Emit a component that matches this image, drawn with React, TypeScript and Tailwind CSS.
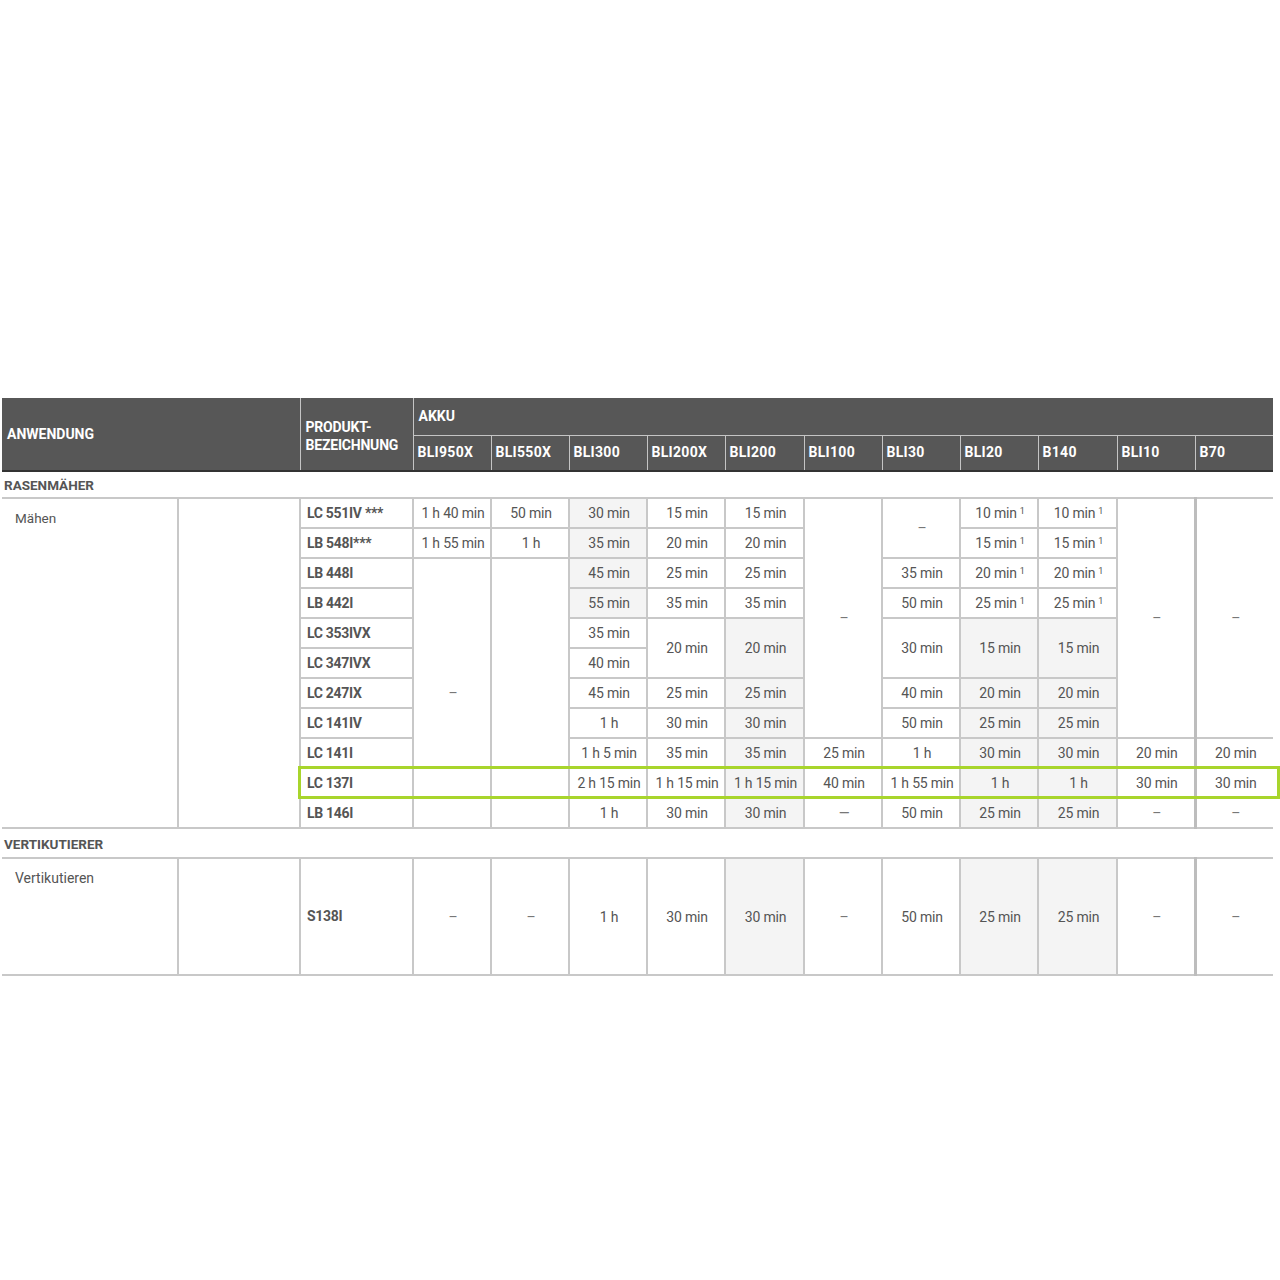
import React from 'react';

type Cell = { t?: string; s?: boolean; rs?: number; sup?: boolean; col: number };

const akku = ['BLI950X', 'BLI550X', 'BLI300', 'BLI200X', 'BLI200', 'BLI100', 'BLI30', 'BLI20', 'B140', 'BLI10', 'B70'];
const akkuWidth = ['w-[78px]', 'w-[78px]', 'w-[78px]', 'w-[78px]', 'w-[79px]', 'w-[78px]', 'w-[78px]', 'w-[78px]', 'w-[79px]', 'w-[78px]', 'w-[78px]'];

// col index: 3..13 = akku columns
const rows: { name: string; cells: Cell[] }[] = [
  {
    name: 'LC 551IV ***',
    cells: [
      { col: 3, t: '1 h 40 min' },
      { col: 4, t: '50 min' },
      { col: 5, t: '30 min', s: true },
      { col: 6, t: '15 min' },
      { col: 7, t: '15 min' },
      { col: 8, t: '–', rs: 8 },
      { col: 9, t: '–', rs: 2 },
      { col: 10, t: '10 min', sup: true },
      { col: 11, t: '10 min', sup: true },
      { col: 12, t: '–', rs: 8 },
      { col: 13, t: '–', rs: 8 },
    ],
  },
  {
    name: 'LB 548I***',
    cells: [
      { col: 3, t: '1 h 55 min' },
      { col: 4, t: '1 h' },
      { col: 5, t: '35 min', s: true },
      { col: 6, t: '20 min' },
      { col: 7, t: '20 min' },
      { col: 10, t: '15 min', sup: true },
      { col: 11, t: '15 min', sup: true },
    ],
  },
  {
    name: 'LB 448I',
    cells: [
      { col: 3, t: '–', rs: 9 },
      { col: 4, t: '', rs: 9 },
      { col: 5, t: '45 min', s: true },
      { col: 6, t: '25 min' },
      { col: 7, t: '25 min' },
      { col: 9, t: '35 min' },
      { col: 10, t: '20 min', sup: true },
      { col: 11, t: '20 min', sup: true },
    ],
  },
  {
    name: 'LB 442I',
    cells: [
      { col: 5, t: '55 min', s: true },
      { col: 6, t: '35 min' },
      { col: 7, t: '35 min' },
      { col: 9, t: '50 min' },
      { col: 10, t: '25 min', sup: true },
      { col: 11, t: '25 min', sup: true },
    ],
  },
  {
    name: 'LC 353IVX',
    cells: [
      { col: 5, t: '35 min' },
      { col: 6, t: '20 min', rs: 2 },
      { col: 7, t: '20 min', rs: 2, s: true },
      { col: 9, t: '30 min', rs: 2 },
      { col: 10, t: '15 min', rs: 2, s: true },
      { col: 11, t: '15 min', rs: 2, s: true },
    ],
  },
  {
    name: 'LC 347IVX',
    cells: [{ col: 5, t: '40 min' }],
  },
  {
    name: 'LC 247IX',
    cells: [
      { col: 5, t: '45 min' },
      { col: 6, t: '25 min' },
      { col: 7, t: '25 min', s: true },
      { col: 9, t: '40 min' },
      { col: 10, t: '20 min', s: true },
      { col: 11, t: '20 min', s: true },
    ],
  },
  {
    name: 'LC 141IV',
    cells: [
      { col: 5, t: '1 h' },
      { col: 6, t: '30 min' },
      { col: 7, t: '30 min', s: true },
      { col: 9, t: '50 min' },
      { col: 10, t: '25 min', s: true },
      { col: 11, t: '25 min', s: true },
    ],
  },
  {
    name: 'LC 141I',
    cells: [
      { col: 5, t: '1 h 5 min' },
      { col: 6, t: '35 min' },
      { col: 7, t: '35 min', s: true },
      { col: 8, t: '25 min' },
      { col: 9, t: '1 h' },
      { col: 10, t: '30 min', s: true },
      { col: 11, t: '30 min', s: true },
      { col: 12, t: '20 min' },
      { col: 13, t: '20 min' },
    ],
  },
  {
    name: 'LC 137I',
    cells: [
      { col: 5, t: '2 h 15 min' },
      { col: 6, t: '1 h 15 min' },
      { col: 7, t: '1 h 15 min', s: true },
      { col: 8, t: '40 min' },
      { col: 9, t: '1 h 55 min' },
      { col: 10, t: '1 h', s: true },
      { col: 11, t: '1 h', s: true },
      { col: 12, t: '30 min' },
      { col: 13, t: '30 min' },
    ],
  },
  {
    name: 'LB 146I',
    cells: [
      { col: 5, t: '1 h' },
      { col: 6, t: '30 min' },
      { col: 7, t: '30 min', s: true },
      { col: 8, t: '—' },
      { col: 9, t: '50 min' },
      { col: 10, t: '25 min', s: true },
      { col: 11, t: '25 min', s: true },
      { col: 12, t: '–' },
      { col: 13, t: '–' },
    ],
  },
];

const vertRow: Cell[] = [
  { col: 3, t: '–' },
  { col: 4, t: '–' },
  { col: 5, t: '1 h' },
  { col: 6, t: '30 min' },
  { col: 7, t: '30 min', s: true },
  { col: 8, t: '–' },
  { col: 9, t: '50 min' },
  { col: 10, t: '25 min', s: true },
  { col: 11, t: '25 min', s: true },
  { col: 12, t: '–' },
  { col: 13, t: '–' },
];

function ValueCell({ c }: { c: Cell }) {
  const edge =
    c.col === 13
      ? 'border-r-0 border-l-[3px] border-l-[#bdbdbd]'
      : c.col === 12
        ? 'border-r-[3px] border-r-[#bdbdbd]'
        : '';
  return (
    <td
      rowSpan={c.rs}
      className={`border-2 border-[#c8c8c8] p-0 pl-[2px] text-center align-middle text-[14px] leading-none tracking-[-0.2px] ${
        c.t === '–' || c.t === '—' ? 'text-[#777]' : 'text-[#555]'
      } ${c.s ? 'bg-[#f4f4f4]' : 'bg-white'} ${edge}`}
    >
      {c.t}
      {c.sup && <span className="relative -top-[4px] ml-[3px] text-[9px]">1</span>}
    </td>
  );
}

export default function App() {
  return (
    <div className="min-h-[1280px] w-[1280px] bg-white pt-[398px] pl-[2px] font-[Roboto,sans-serif]">
      <div className="relative w-fit">
        <table className="table-fixed border-collapse">
          <colgroup>
            <col className="w-[176px]" />
            <col className="w-[122px]" />
            <col className="w-[113px]" />
            {akku.map((a, i) => (
              <col key={a} className={akkuWidth[i]} />
            ))}
          </colgroup>
          <thead className="bg-[#575757] text-white">
            <tr className="h-[37px]">
              <th
                colSpan={2}
                rowSpan={2}
                className="border-b-2 border-b-[#333] border-r border-r-[#c4c4c4] pl-[5px] text-left align-middle text-[14px] font-bold"
              >
                ANWENDUNG
              </th>
              <th
                rowSpan={2}
                className="border-b-2 border-b-[#333] border-r border-r-[#c4c4c4] pl-[5px] pt-[4px] text-left align-middle text-[14px] leading-[18px] font-bold tracking-[-0.2px]"
              >
                PRODUKT-
                <br />
                BEZEICHNUNG
              </th>
              <th colSpan={11} className="border-b border-b-[#c4c4c4] pl-[5px] text-left align-middle text-[14px] font-bold">
                AKKU
              </th>
            </tr>
            <tr className="h-[36px]">
              {akku.map((a, i) => (
                <th
                  key={a}
                  className={`border-b-2 border-b-[#333] pl-[4px] text-left align-middle text-[14px] font-bold tracking-[0.3px] ${
                    i < 10 ? 'border-r border-r-[#c4c4c4]' : ''
                  }`}
                >
                  {a}
                </th>
              ))}
            </tr>
          </thead>
          <tbody>
            <tr className="h-[27px]">
              <td colSpan={14} className="border-b-2 border-b-[#c8c8c8] pl-[2px] pt-[2px] text-left text-[13.5px] font-bold text-[#555]">
                RASENMÄHER
              </td>
            </tr>
            {rows.map((r, ri) => (
              <tr key={r.name} className="h-[30px]">
                {ri === 0 && (
                  <>
                    <td rowSpan={11} className="border-2 border-l-0 border-[#c8c8c8] pl-[13px] pt-[9px] align-top text-[13.5px] text-[#555]">
                      Mähen
                    </td>
                    <td rowSpan={11} className="border-2 border-[#c8c8c8]" />
                  </>
                )}
                <td className="border-2 border-[#c8c8c8] pl-[6px] text-left align-middle text-[14px] font-bold tracking-[-0.3px] text-[#555]">
                  {r.name}
                </td>
                {r.cells.map(c => (
                  <ValueCell key={c.col} c={c} />
                ))}
              </tr>
            ))}
            <tr className="h-[30px]">
              <td colSpan={14} className="border-b-2 border-b-[#c8c8c8] pl-[2px] pt-[2px] text-left text-[13.5px] font-bold text-[#555]">
                VERTIKUTIERER
              </td>
            </tr>
            <tr className="h-[117px]">
              <td className="border-2 border-l-0 border-[#c8c8c8] pl-[13px] pt-[9px] align-top text-[14px] text-[#555]">
                Vertikutieren
              </td>
              <td className="border-2 border-[#c8c8c8]" />
              <td className="border-2 border-[#c8c8c8] pl-[6px] text-left align-middle text-[14px] font-bold tracking-[-0.3px] text-[#555]">
                S138I
              </td>
              {vertRow.map(c => (
                <ValueCell key={c.col} c={c} />
              ))}
            </tr>
          </tbody>
        </table>
        <div className="pointer-events-none absolute left-[296px] top-[368px] h-[33px] w-[982px] border-[3px] border-[#a8d52c]" />
      </div>
    </div>
  );
}
